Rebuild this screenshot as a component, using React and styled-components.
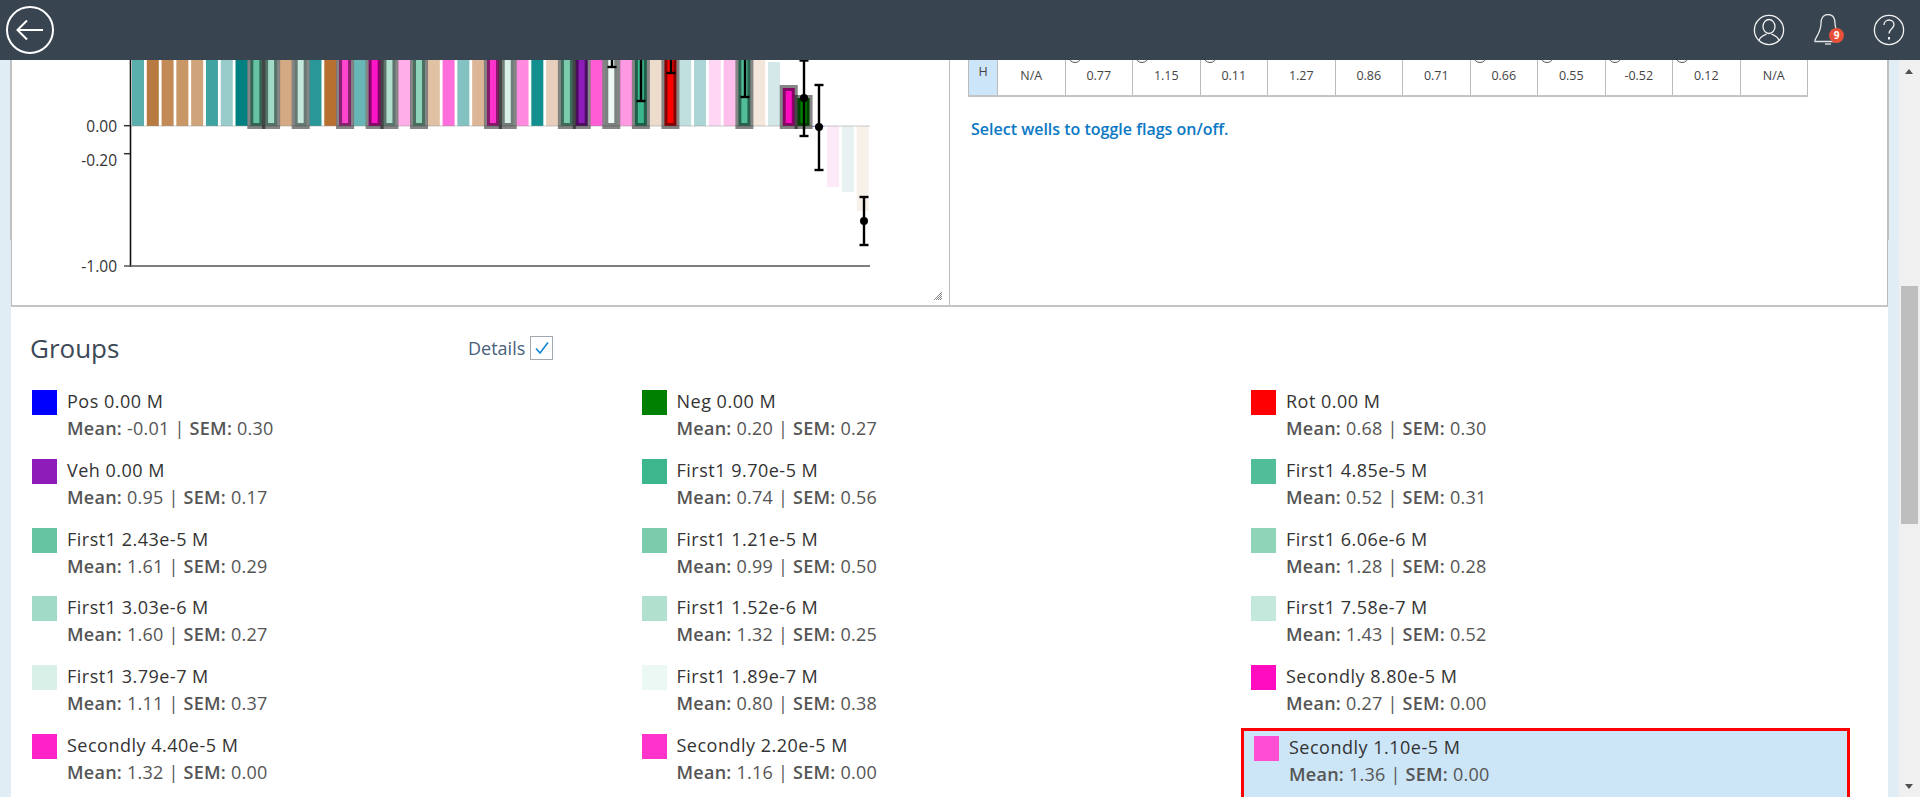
import React from "react";
import styled, { createGlobalStyle } from "styled-components";

const Global = createGlobalStyle`
  html, body { margin: 0; padding: 0; height: 100%; overflow: hidden; }
  body { font-family: "Open Sans", "Noto Sans", sans-serif; background: #fff; }
  #root { height: 100%; }
`;

const Page = styled.div`
  display: flex;
  flex-direction: column;
  width: 1920px;
  height: 797px;
  overflow: hidden;
`;
const Header = styled.header`
  position: relative;
  z-index: 2;
  flex: 0 0 60px;
  display: flex;
  align-items: center;
  justify-content: space-between;
  padding: 0 15px 0 6px;
  background: #38444f;
`;
const HeaderIcons = styled.div`
  display: flex;
  align-items: center;
  gap: 28px;
`;
const IconSlot = styled.div`
  position: relative;
  width: 32px;
  height: 32px;
`;
const Badge = styled.span`
  position: absolute;
  left: 16px;
  top: 14px;
  width: 15px;
  height: 15px;
  border-radius: 50%;
  background: #e9503a;
  color: #fff;
  font-size: 10px;
  font-weight: 700;
  line-height: 15px;
  text-align: center;
`;
const Body = styled.div`
  flex: 1;
  display: flex;
  min-height: 0;
`;
const Main = styled.main`
  flex: 1;
  display: flex;
  flex-direction: column;
  padding: 0 11px;
  background: #e1edf5;
  min-width: 0;
`;
const Panel = styled.section`
  position: relative;
  flex: 0 0 247px;
  box-sizing: border-box;
  display: grid;
  grid-template-columns: 938px 1fr;
  background: #fff;
  border-left: 1px solid #bbb;
  border-right: 1px solid #bbb;
  border-bottom: 2px solid #c4c4c4;
  &::before, &::after {
    content: "";
    position: absolute;
    top: 0;
    width: 2px;
    height: 180px;
    background: #c0c0c0;
  }
  &::before { left: -2px; }
  &::after { right: -2px; }
`;
const ChartPane = styled.div`
  border-right: 1px solid #bbb;
  overflow: hidden;
`;
const Plate = styled.div`
  padding-left: 18px;
`;
const WellRow = styled.div`
  display: grid;
  grid-template-columns: 29px repeat(12, 67.5px);
  width: 840px;
  height: 37px;
  box-sizing: border-box;
  border-left: 1px solid #bbb;
  border-bottom: 2px solid #c4c4c4;
`;
const RowLabel = styled.div`
  background: #cce5f8;
  color: #444;
  font-size: 12.5px;
  text-align: center;
  padding-top: 3px;
  border-right: 1px solid #bbb;
`;
const Well = styled.div`
  position: relative;
  color: #444;
  font-size: 12.5px;
  text-align: center;
  padding-top: 7px;
  border-right: 1px solid #bbb;
  box-sizing: border-box;
  &::before {
    content: "";
    display: ${(p) => (p.$flag ? "block" : "none")};
    position: absolute;
    left: 2px;
    top: -11px;
    width: 14px;
    height: 14px;
    box-sizing: border-box;
    border: 1px solid #555;
    border-radius: 50%;
  }
`;
const Hint = styled.p`
  margin: 22px 0 0 3px;
  font-size: 16px;
  font-weight: 600;
  line-height: 20px;
  color: #0a78c4;
`;
const Groups = styled.section`
  flex: 1;
  background: #fff;
  padding: 29px 0 0 21px;
  min-height: 0;
  overflow: hidden;
`;
const GroupsHead = styled.div`
  display: flex;
  align-items: center;
  height: 24px;
  margin-bottom: 30px;
`;
const Title = styled.h2`
  flex: 0 0 438px;
  margin: 0 0 0 -2px;
  font-size: 26px;
  font-weight: 400;
  line-height: 24px;
  color: #3b4856;
`;
const DetailsLabel = styled.span`
  font-size: 18px;
  color: #47607c;
  margin-right: 5px;
`;
const CheckBox = styled.span`
  display: flex;
  align-items: center;
  justify-content: center;
  box-sizing: border-box;
  width: 23px;
  height: 24px;
  border: 1px solid #a3a9b0;
`;
const GroupGrid = styled.div`
  display: grid;
  grid-template-columns: repeat(3, 609.5px);
  grid-auto-rows: 68.8px;
`;
const Item = styled.div`
  display: flex;
  align-items: flex-start;
  box-sizing: border-box;
  ${(p) =>
    p.$selected &&
    `
    margin: -6px 10.5px 0 -10px;
    padding: 5px 0 0 10px;
    height: 90px;
    background: #cce5f7;
    border: 3px solid #f00;
  `}
`;
const Swatch = styled.span`
  flex: 0 0 25px;
  height: 25px;
  margin-right: 10px;
  background: ${(p) => p.$color};
`;
const ItemText = styled.div`
  font-size: 18px;
  line-height: 27px;
`;
const ItemName = styled.div`
  color: #333;
  margin-top: -2px;
  letter-spacing: 0.5px;
`;
const ItemStats = styled.div`
  color: #555;
  letter-spacing: 0.25px;
  b { font-weight: 600; }
`;
const Scrollbar = styled.aside`
  flex: 0 0 21px;
  position: relative;
  background: #f0f0f0;
`;
const Thumb = styled.div`
  position: absolute;
  left: 2px;
  right: 2px;
  top: 226px;
  height: 238px;
  background: #bebebe;
`;
const Arrow = styled.div`
  position: absolute;
  left: 6px;
  width: 0;
  height: 0;
  border-left: 4.5px solid transparent;
  border-right: 4.5px solid transparent;
  ${(p) =>
    p.$down
      ? `bottom: 8px; border-top: 5px solid #505050;`
      : `top: 9px; border-bottom: 5px solid #505050;`}
`;

const bars = [
  ["#5aaeac"], ["#b87a40"], ["#c28a55"], ["#c99665"], ["#cfa47b"], ["#3fa3a2"], ["#98cccb"], ["#008080"],
  ["#66c4a3", 1], ["#a1dac6", 1], ["#d4aa85"], ["#c5e8dc", 1], ["#2a9898"], ["#b87030"], ["#ff44d0", 1], ["#68b6b6"],
  ["#ff14c8", 1], ["#b2e0cf", 1], ["#ffaee9"], ["#8fd3b9", 1], ["#e0c1a3"], ["#ff6edb"], ["#84c2c2"], ["#ddb697"],
  ["#ff33cc", 1], ["#d9f0e8", 1], ["#ff8ae0"], ["#148f8f"], ["#e8cfbd"], ["#7accad", 1], ["#8e1cb8", 1], ["#ff5cd6"],
  ["#ecf8f4", 1], ["#ff99e4"], ["#3cb68d", 1], ["#eddbcb"], ["#ff0000", 1], ["#c0dfdf"], ["#acd6d5"], ["#ffd6f3"],
  ["#ffbfec"], ["#52bd99", 1], ["#f3e6da"], ["#d4e8e9", 0, 62], ["#ff0cc0", 1, 88], ["#008000", 1, 98], ["#0000ff", 1, 126],
  ["#fde9f8", 0, 187, 1], ["#e8f2f3", 0, 192, 1], ["#f7f1ea", 0, 211, 1],
];
const errorBars = [
  { x: 611, top: 40, low: 67 },
  { x: 640, top: 40, low: 101 },
  { x: 670, top: 40, low: 73 },
  { x: 744, top: 40, low: 97 },
  { x: 803, top: 60.5, low: 136, dot: 98 },
  { x: 818, top: 85, low: 170, dot: 127 },
  { x: 863, top: 197, low: 245, dot: 221 },
];
const barX = (i) => 131 + i * 14.79;

function Chart() {
  return (
    <svg width="938" height="245" viewBox="11 60 938 245" style={{ display: "block" }}>
      {bars.map(([color, , end, neg], i) => {
        const far = end === undefined ? 40 : end;
        const y = neg ? 126 : far;
        const h = neg ? far - 126 : 126 - far;
        return <rect key={i} x={barX(i)} y={y} width="12" height={Math.max(h, 0.5)} fill={color} />;
      })}
      <line x1="129" x2="869" y1="126" y2="126" stroke="#999" strokeOpacity="0.35" strokeWidth="1.5" />
      {bars.map(([, flag, end], i) =>
        flag ? (
          <rect
            key={i}
            x={barX(i)}
            y={end === undefined ? 40 : end}
            width="12"
            height={126 - (end === undefined ? 40 : end)}
            fill="none"
            stroke="#000"
            strokeOpacity="0.48"
            strokeWidth="6"
          />
        ) : null
      )}
      {errorBars.map((e) => (
        <g key={e.x} stroke="#000" strokeWidth="2.4">
          <line x1={e.x} x2={e.x} y1={e.top} y2={e.low} />
          <line x1={e.x - 4.5} x2={e.x + 4.5} y1={e.low} y2={e.low} />
          <line x1={e.x - 4.5} x2={e.x + 4.5} y1={e.top} y2={e.top} />
          {e.dot ? <circle cx={e.x} cy={e.dot} r="4" fill="#000" stroke="none" /> : null}
        </g>
      ))}
      <line x1="129.5" x2="129.5" y1="40" y2="267" stroke="#111" strokeWidth="1.6" />
      <line x1="123" x2="869" y1="266" y2="266" stroke="#555" strokeWidth="1.6" />
      <line x1="123" x2="129" y1="125.7" y2="125.7" stroke="#333" strokeWidth="1.5" />
      <line x1="123" x2="129" y1="153.7" y2="153.7" stroke="#333" strokeWidth="1.5" />
      <g fontFamily="'Open Sans', sans-serif" fontSize="15.5" fill="#333" textAnchor="end">
        <text x="116" y="131.500">0.00</text>
        <text x="116" y="165.500">-0.20</text>
        <text x="116" y="271.500">-1.00</text>
      </g>
      <g stroke="#888" strokeWidth="1">
        <line x1="933" x2="941" y1="300" y2="292" />
        <line x1="935" x2="941" y1="300" y2="294" />
        <line x1="937" x2="941" y1="300" y2="296" />
        <line x1="939" x2="941" y1="300" y2="298" />
      </g>
    </svg>
  );
}

const wells = [
  ["N/A"], ["0.77", 1], ["1.15", 1], ["0.11", 1], ["1.27"], ["0.86"], ["0.71"], ["0.66", 1], ["0.55", 1], ["-0.52", 1], ["0.12", 1], ["N/A"],
];

const groups = [
  ["#0000ff", "Pos 0.00 M", "-0.01", "0.30"],
  ["#008000", "Neg 0.00 M", "0.20", "0.27"],
  ["#ff0000", "Rot 0.00 M", "0.68", "0.30"],
  ["#8e1cb8", "Veh 0.00 M", "0.95", "0.17"],
  ["#3cb68d", "First1 9.70e-5 M", "0.74", "0.56"],
  ["#52bd99", "First1 4.85e-5 M", "0.52", "0.31"],
  ["#66c4a3", "First1 2.43e-5 M", "1.61", "0.29"],
  ["#7accad", "First1 1.21e-5 M", "0.99", "0.50"],
  ["#8fd3b9", "First1 6.06e-6 M", "1.28", "0.28"],
  ["#a1dac6", "First1 3.03e-6 M", "1.60", "0.27"],
  ["#b2e0cf", "First1 1.52e-6 M", "1.32", "0.25"],
  ["#c5e8dc", "First1 7.58e-7 M", "1.43", "0.52"],
  ["#d9f0e8", "First1 3.79e-7 M", "1.11", "0.37"],
  ["#ecf8f4", "First1 1.89e-7 M", "0.80", "0.38"],
  ["#ff0cc0", "Secondly 8.80e-5 M", "0.27", "0.00"],
  ["#ff22c8", "Secondly 4.40e-5 M", "1.32", "0.00"],
  ["#ff33cc", "Secondly 2.20e-5 M", "1.16", "0.00"],
  ["#ff4dd4", "Secondly 1.10e-5 M", "1.36", "0.00", true],
];

export default function App() {
  return (
    <Page>
      <Global />
      <Header>
        <svg width="48" height="48" viewBox="0 0 48 48" fill="none" stroke="#fff">
          <circle cx="24" cy="24" r="23" strokeWidth="2" />
          <path d="M37 24H12M21 14.5L11.5 24l9.500 9.500" strokeWidth="2" />
        </svg>
        <HeaderIcons>
          <IconSlot>
            <svg width="32" height="32" viewBox="0 0 32 32" fill="none" stroke="#f2f2f2" strokeWidth="1.3">
              <circle cx="16" cy="16" r="14.6" />
              <ellipse cx="16" cy="12.500" rx="6" ry="7" />
              <path d="M6 26.500c1-4 4-5 7.500-6.500M26 26.500c-1-4-4-5-7.500-6.500" />
            </svg>
          </IconSlot>
          <IconSlot>
            <svg width="32" height="32" viewBox="0 0 32 32" fill="none" stroke="#e6e6e6" strokeWidth="1.3">
              <path d="M15 0.500c-5 0-7 4-7 9 0 7-3 10.500-6 16.500v1.500h24" />
              <path d="M15 0.500c5 0 7 4 7 9 0 2 .5 3.500 1 5" />
              <path d="M12 30h6" />
            </svg>
            <Badge>9</Badge>
          </IconSlot>
          <IconSlot>
            <svg width="32" height="32" viewBox="0 0 32 32" fill="none" stroke="#f2f2f2" strokeWidth="1.300">
              <circle cx="16" cy="16" r="14.600" />
              <path d="M11 11c0-3 2.300-5 5-5s5 2 5 4.800c0 3.700-5 4.200-5 8.700" />
              <path d="M16 23v2.500" strokeWidth="2" />
            </svg>
          </IconSlot>
        </HeaderIcons>
      </Header>
      <Body>
        <Main>
          <Panel>
            <ChartPane>
              <Chart />
            </ChartPane>
            <Plate>
              <WellRow>
                <RowLabel>H</RowLabel>
                {wells.map(([v, flag], i) => (
                  <Well key={i} $flag={flag}>{v}</Well>
                ))}
              </WellRow>
              <Hint>Select wells to toggle flags on/off.</Hint>
            </Plate>
          </Panel>
          <Groups>
            <GroupsHead>
              <Title>Groups</Title>
              <DetailsLabel>Details</DetailsLabel>
              <CheckBox>
                <svg width="18" height="18" viewBox="0 0 18 18" fill="none" stroke="#1283d4" strokeWidth="1.6">
                  <path d="M3 9.500l4 4.500 8-10.500" />
                </svg>
              </CheckBox>
            </GroupsHead>
            <GroupGrid>
              {groups.map(([color, name, mean, sem, selected]) => (
                <Item key={name} $selected={selected}>
                  <Swatch $color={color} />
                  <ItemText>
                    <ItemName>{name}</ItemName>
                    <ItemStats>
                      <b>Mean:</b> {mean} | <b>SEM:</b> {sem}
                    </ItemStats>
                  </ItemText>
                </Item>
              ))}
            </GroupGrid>
          </Groups>
        </Main>
        <Scrollbar>
          <Arrow />
          <Thumb />
          <Arrow $down />
        </Scrollbar>
      </Body>
    </Page>
  );
}
